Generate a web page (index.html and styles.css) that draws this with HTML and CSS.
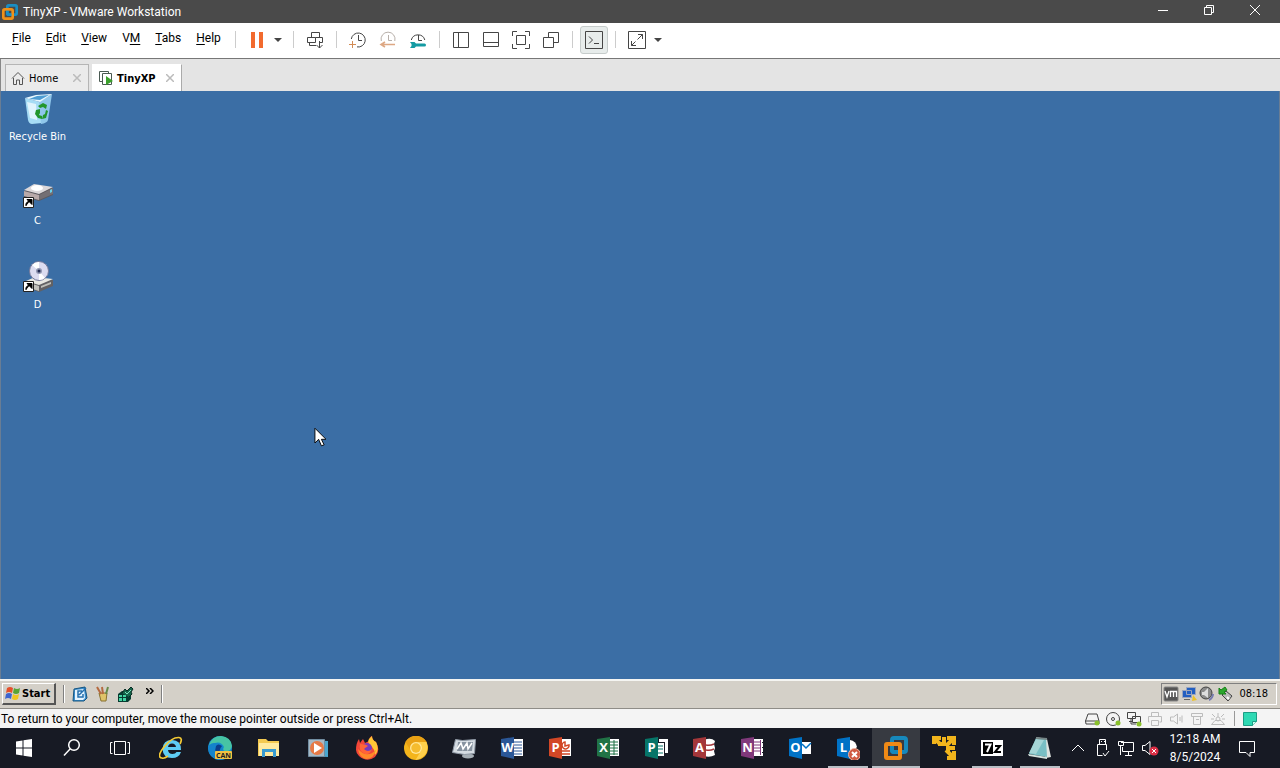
FILE: index.html
```html
<!DOCTYPE html>
<html lang="en">
<head>
<meta charset="utf-8">
<title>TinyXP - VMware Workstation</title>
<link rel="stylesheet" href="styles.css">
</head>
<body>
<div class="screen">
  <header class="titlebar">
    <svg class="app-logo" viewBox="0 0 24 24"><rect x="8" y="2" width="14" height="14" rx="2" fill="none" stroke="#1a8fc4" stroke-width="4"/><rect x="2" y="8" width="14" height="14" rx="2" fill="none" stroke="#f09118" stroke-width="4"/><path d="M8 10V14a2 2 0 0 0 2 2H14" fill="none" stroke="#1a8fc4" stroke-width="4"/></svg>
    <h1 class="title">TinyXP - VMware Workstation</h1>
    <div class="window-controls">
      <button class="wc" aria-label="Minimize"><svg viewBox="0 0 12 12"><path d="M1 6.500H11"/></svg></button>
      <button class="wc" aria-label="Restore"><svg viewBox="0 0 12 12"><path d="M1.500 3.500h7v7h-7zM3.500 3.500v-2h7v7h-2"/></svg></button>
      <button class="wc" aria-label="Close"><svg viewBox="0 0 12 12"><path d="M1 1L11 11M11 1L1 11"/></svg></button>
    </div>
  </header>

  <div class="toolbar">
    <nav class="menu">
      <button><u>F</u>ile</button><button><u>E</u>dit</button><button><u>V</u>iew</button><button>V<u>M</u></button><button><u>T</u>abs</button><button><u>H</u>elp</button>
    </nav>
    <div class="tools">
      <i class="sep"></i>
      <button class="tool" aria-label="Suspend"><svg viewBox="0 0 20 20"><path d="M4 2h4v16H4zM12 2h4v16h-4z" fill="#f26a2e" stroke="none"/></svg></button>
      <button class="caret" aria-label="Power options"><svg viewBox="0 0 8 4"><path d="M0 0h8L4 4z"/></svg></button>
      <i class="sep"></i>
      <button class="tool" aria-label="Send Ctrl+Alt+Del"><svg viewBox="0 0 20 20"><path d="M6.500 7V2.500h8V7.500M2.500 12.500v-5h8v5zM10.500 7.500h7v5H15M4.500 12.500v3H11M14.500 11v7M11.500 15l3 3 3-3"/></svg></button>
      <i class="sep"></i>
      <div class="group">
        <button class="tool" aria-label="Take snapshot"><svg viewBox="0 0 20 20"><path d="M3.300 9A7 7 0 1 1 9 16.900M10.500 5v5.500H14"/><path d="M4.500 11v7M1 14.500h7" stroke="#d28c55"/></svg></button>
        <button class="tool" aria-label="Revert snapshot"><svg viewBox="0 0 20 20"><path d="M3.300 11A7 7 0 1 1 16.800 11M10.500 5v5.500H14" stroke="#b8b0aa"/><path d="M7 12l-4 2.500L7 17M3 14.500h14" stroke="#dda884" stroke-width="1.600"/></svg></button>
        <button class="tool" aria-label="Manage snapshots"><svg viewBox="0 0 20 20"><path d="M3.300 10A7 7 0 0 1 16.800 10M10.500 5v5.500H14"/><path d="M2 12h4.500l1.500 1.500h8.500a1.500 1.500 0 0 1 0 3H8L6.500 18H2l1.500-2v-2z" fill="#159ba3" stroke="none"/></svg></button>
      </div>
      <i class="sep"></i>
      <div class="group">
        <button class="tool" aria-label="Show library"><svg viewBox="0 0 20 20"><path d="M2.500 2.500h15v15h-15zM7.500 2.500v15"/></svg></button>
        <button class="tool" aria-label="Show thumbnails"><svg viewBox="0 0 20 20"><path d="M2.500 2.500h15v14h-15zM2.500 12.500h15"/></svg></button>
        <button class="tool" aria-label="Full screen"><svg viewBox="0 0 20 20"><path d="M1.500 6V1.500H6M14 1.500h4.500V6M18.500 14v4.500H14M6 18.500H1.500V14M5.500 5.500h9v9h-9z"/></svg></button>
        <button class="tool" aria-label="Unity"><svg viewBox="0 0 20 20"><path d="M2.500 7.500h10v10h-10zM7.500 7.500v-5h10v10h-5"/></svg></button>
      </div>
      <i class="sep"></i>
      <button class="tool pressed" aria-label="Console view"><svg viewBox="0 0 20 20"><path d="M1.500 1.500h17v17h-17zM5 6.500l3.500 3.500L5 13.500M10 13.500h5"/></svg></button>
      <i class="sep"></i>
      <button class="tool" aria-label="Stretch guest"><svg viewBox="0 0 20 20"><path d="M1.500 1.500h17v17h-17zM11 4.500h4.500V9M15.500 4.500l-5 5M4.500 11v4.500H9M4.500 15.500l4-4"/></svg></button>
      <button class="caret" aria-label="Stretch options"><svg viewBox="0 0 8 4"><path d="M0 0h8L4 4z"/></svg></button>
    </div>
  </div>

  <div class="tabs">
    <div class="tab">
      <svg class="tab-icon" viewBox="0 0 14 14"><path d="M1 7.500L7 1.500l6 6M2.500 7v6.500h3V9h3v4.500h3V7" fill="none" stroke="#555"/></svg>
      <button class="tab-name">Home</button><button class="tab-close" aria-label="Close Home"><svg viewBox="0 0 8 8"><path d="M0 0l8 8M8 0L0 8"/></svg></button>
    </div>
    <div class="tab active">
      <svg class="tab-icon" viewBox="0 0 14 14"><path d="M3.500 10.500h-3V.500h9v2M3.500 2.500h9v11h-9z" fill="none" stroke="#4a5a52"/><path d="M7 5l7 5-7 4z" fill="#3ba02c"/></svg>
      <button class="tab-name">TinyXP</button><button class="tab-close" aria-label="Close TinyXP"><svg viewBox="0 0 8 8"><path d="M0 0l8 8M8 0L0 8"/></svg></button>
    </div>
  </div>

  <main class="desktop">
    <button class="shortcut">
      <svg viewBox="0 0 32 32"><path d="M3 5l15 4 2 21-10 1q-3 0-4-4z" fill="#a6dcf5"/><path d="M17 9L30 1l-4 26q-1 3-7 4z" fill="#8fc6ea"/><path d="M3 5L14 2 30 1l-12 8z" fill="#e8f8ff"/><path d="M7 6l8-3 12-1-9 5z" fill="#4d9cd2"/><path d="M5 9l9 2 1 16-7-2z" fill="#effaff" opacity=".8"/><path d="M16 13l5-3 4 2-1 4-3-2-3 1zM24 17l2 1-2 7-4 1 1-4 2-1zM14 17l4-1v4l-1 2 3 1v3l-4-1-3-4z" fill="#23962b"/></svg>
      <span>Recycle Bin</span>
    </button>
    <button class="shortcut">
      <svg viewBox="0 0 32 32"><path d="M2 14l10-6 19 3v7l-14 6L2 20z" fill="#5d5a60"/><path d="M2 13l10-6 19 3-14 7z" fill="#dcd8da"/><path d="M2 14l15 4v5L2 19z" fill="#b8a9a9"/><path d="M17 18l14-7v6l-14 6z" fill="#746f74"/><ellipse cx="15" cy="11" rx="6" ry="3" fill="#fff"/><path d="M28 13l2-1v3l-2 1z" fill="#6bd0e8"/><path d="M1.500 20.500h10v10h-10z" fill="#fff" stroke="#222"/><path d="M4 29q-1-4 4-5M5 22.500h5v5z" fill="#000" stroke="#000"/></svg>
      <span>C</span>
    </button>
    <button class="shortcut">
      <svg viewBox="0 0 32 32"><path d="M4 21l9-4 18 2v6l-14 6L4 26z" fill="#626164"/><path d="M4 20l9-4 18 2-14 6z" fill="#e8e8e2"/><path d="M4 21l13 4v5L4 26z" fill="#c2c1bb"/><path d="M19 27l10-4v-2l-10 4z" fill="#bdbdb7"/><circle cx="17" cy="10" r="9.500" fill="#dcdcf0" stroke="#777b9b"/><path d="M17 10L10 4a9 9 0 0 1 7-3zM17 10l6 7a9 9 0 0 1-6 2z" fill="#fff"/><circle cx="17" cy="10" r="3" fill="#9297b2"/><circle cx="17" cy="10" r="1.500" fill="#222b52"/><path d="M1.500 20.500h10v10h-10z" fill="#fff" stroke="#222"/><path d="M4 29q-1-4 4-5M5 22.500h5v5z" fill="#000" stroke="#000"/></svg>
      <span>D</span>
    </button>
    <svg class="cursor" viewBox="0 0 13 21"><path d="M1 1v16l4-4 3 7 3-1-3-6h5z" fill="#fff" stroke="#000"/></svg>
  </main>

  <div class="xpbar">
    <button class="xpstart"><svg viewBox="0 0 16 16"><path d="M2 3q3-2 6 0L7 8Q4 6 1 8z" fill="#e5502b"/><path d="M9 3q3 2 6 0l-1 5q-3 2-6 0z" fill="#58a536"/><path d="M1 9q3-2 6 0l-1 5q-3-2-6 0z" fill="#3d65cf"/><path d="M8 9q3 2 6 0l-1 5q-3 2-6 0z" fill="#f0c520"/></svg>Start</button>
    <i class="xpsep"></i>
    <div class="quick">
      <button aria-label="Show Desktop"><svg viewBox="0 0 16 16"><path d="M2 3l11-2 2 11-3 3H1z" fill="#3c8fce" stroke="#155480"/><path d="M3 4l9-1 1 9-2 2H3z" fill="#e5f4ff"/><path d="M10 5H6v6h5V8M7 9l7-7" stroke="#246fae" stroke-width="1.500" fill="none"/></svg></button>
      <button aria-label="Tools"><svg viewBox="0 0 16 16"><path d="M4 7h8l-1 8H6z" fill="#dfc46a" stroke="#877130"/><path d="M2 1l4 7M7 1l1 7" stroke="#b56a40" stroke-width="2"/><path d="M13 1l-2 7" stroke="#678a48" stroke-width="2"/></svg></button>
      <button aria-label="Utility"><svg viewBox="0 0 16 16"><path d="M0 8l4-3h9v8l-3 3H0z" fill="#073c31"/><path d="M1 9h3v2H1zM5 9h3v2H5zM1 12h3v3H1zM5 12h3v3H5z" fill="#42d3a3"/><path d="M4 7l3-4 2 2 4-4 2 2-2 3 1 2-3 3" fill="#16664b" stroke="#062a22"/><path d="M7 6l2 2 4-4" fill="none" stroke="#7de0bf"/></svg></button>
    </div>
    <button class="more" aria-label="More quick launch items"><svg viewBox="0 0 8 6"><path d="M0 0l3 3-3 3M4 0l3 3-3 3"/></svg></button>
    <i class="xpsep"></i>
    <div class="xptray">
      <svg viewBox="0 0 16 16"><rect x="1" y="1" width="14" height="14" rx="1" fill="#555" stroke="#888"/><path d="M2 5l2 6 2-6M7.500 11V5.500h6V11M10.500 6v5" fill="none" stroke="#fff" stroke-width="1.300"/></svg>
      <svg viewBox="0 0 16 16"><path d="M5.500 1.500h9v7h-9zM1.500 4.500h9v7h-9z" fill="#235fc1" stroke="#9ba5bd"/><path d="M3 13.500h6" stroke="#666"/><path d="M12 9l4 5-5 1z" fill="#eec328"/></svg>
      <svg viewBox="0 0 16 16"><circle cx="7" cy="7" r="6" fill="#8b8b8b" stroke="#444"/><path d="M3 6h2l4-4v10L5 9H3z" fill="#ddd"/><path d="M14 8a7 7 0 0 1-4 6" fill="none" stroke="#777caf" stroke-width="2"/></svg>
      <svg viewBox="0 0 16 16"><path d="M5 9l4-4 6 5-4 5z" fill="#bbb" stroke="#444"/><path d="M10 11l2 2" stroke="#fff" stroke-width="2"/><path d="M2 8V2l2 2 4-3 2 3-3 2 2 2z" fill="#2ca72d" stroke="#168019"/></svg>
      <time>08:18</time>
    </div>
  </div>

  <footer class="status">
    <span>To return to your computer, move the mouse pointer outside or press Ctrl+Alt.</span>
    <div class="devices">
      <svg viewBox="0 0 16 16"><path d="M1.500 10L4 3h9l2 7v3h-13zM1.500 10h13"/><circle class="on" cx="13" cy="12" r="2.500"/></svg>
      <svg viewBox="0 0 16 16"><circle cx="8" cy="8" r="6.500"/><circle cx="8" cy="8" r="1.500"/><circle class="on" cx="13" cy="12" r="2.500"/></svg>
      <svg viewBox="0 0 16 16"><path d="M1.500 1.500h8v6h-8zM6.500 5.500h8v6h-8zM5 8v5h5M3 10.500h4"/><circle class="on" cx="13" cy="13" r="2.500"/></svg>
      <svg class="off" viewBox="0 0 16 16"><path d="M4.500 5V1.500h7V5M2.500 11h-1V5.500h13V11h-2M4.500 9.500h7v5h-7z"/></svg>
      <svg class="off" viewBox="0 0 16 16"><path d="M2.500 6h3l4-3v10l-4-3h-3zM12 6v4M14 4.500v7"/></svg>
      <svg class="off" viewBox="0 0 16 16"><path d="M2.500 2.500h11v3h-11zM4.500 5.500v8h7v-8M7 8.500h3"/></svg>
      <svg class="off" viewBox="0 0 16 16"><path d="M1.500 13.500h13L11 9.500H5zM2 3l3 3M14 3l-3 3M8 2v4M1 8h3M15 8h-3"/><circle cx="8" cy="8" r="2"/></svg>
    </div>
    <i class="status-sep"></i>
    <svg class="note" viewBox="0 0 14 14"><path d="M.500.500h13v9l-4 4h-9z" fill="#2ed9b3" stroke="#1c9c84"/><path d="M9.500 13.500v-4h4" fill="#c6fff0" stroke="#1c9c84"/></svg>
  </footer>

  <nav class="taskbar">
    <button class="app" aria-label="Start"><svg viewBox="0 0 24 24"><path d="M4 5.500l6.500-1v7H4zM11.500 4.300L20 3v8.500h-8.500zM4 12.500h6.500v7L4 18.500zM11.500 12.500H20V21l-8.500-1.300z" fill="#fff"/></svg></button>
    <button class="app" aria-label="Search"><svg viewBox="0 0 24 24"><circle cx="14" cy="9" r="5.300" fill="none" stroke="#fff" stroke-width="1.500"/><path d="M10.300 12.700L4 19.500" stroke="#fff" stroke-width="1.500"/></svg></button>
    <button class="app" aria-label="Task View"><svg viewBox="0 0 24 24"><path d="M6.500 5.500h11v13h-11zM4.500 6.500h-2v11h2M19.500 6.500h2v11h-2" fill="none" stroke="#fff"/></svg></button>
    <div class="pinned">
      <button class="app" aria-label="Internet Explorer"><svg viewBox="0 0 24 24"><path fill-rule="evenodd" d="M22 14H9q.5 4 4.500 4 3 0 4-2h4.500q-2 6-9 6-9 0-9.500-9Q4 4 13 4q9 0 9 10zM9 11h8q-.5-3.500-4-3.500T9 11z" fill="#5fcdf4"/><path d="M21 8Q24 2 20 1.500 13 1 5 11T3 22q2 1 6-2" fill="none" stroke="#f4ca35" stroke-width="1.700"/></svg></button>
      <button class="app" aria-label="Microsoft Edge Canary"><svg viewBox="0 0 24 24"><circle cx="12" cy="12" r="12" fill="#168bd0"/><path d="M1 9Q4 0 13 0q10 1 11 10-1 6-7 5-3-1-1-4Q13 5 7 7 3 7 1 9z" fill="#47c4a4"/><path d="M0 11q6-7 13-2 3 3 1 7 4 4 9 1-4 7-12 7Q0 21 0 11z" fill="#1483cb"/><path d="M8 10q2-3 6 0-5 5 1 8-10 1-7-8z" fill="#0b3e8b"/><rect x="7" y="15" width="17" height="8" rx="1" fill="#f4c242"/><text x="15.500" y="22" class="can">CAN</text></svg></button>
      <button class="app" aria-label="File Explorer"><svg viewBox="0 0 24 24"><path d="M1 3h8l2 2h11v15H1z" fill="#f3c951"/><path d="M2 7h20v13H2z" fill="#ffeaa0"/><path d="M5 21v-8h14v8h-3v-5H8v5z" fill="#389bd0"/></svg></button>
      <button class="app" aria-label="Media Player"><svg viewBox="0 0 24 24"><path d="M4 4l18 1v16l-18-1z" fill="#4aa6ce"/><path d="M2.500 3.500h16v17h-16z" fill="#a5b8c5" stroke="#718da1"/><circle cx="11" cy="12" r="7" fill="#e67a47"/><path d="M8 7l8 5-8 5z" fill="#fff"/></svg></button>
      <button class="app" aria-label="Firefox"><svg viewBox="0 0 24 24"><path d="M1 14Q1 7 4 3l1 4 3-4 2 4 4-2q0-4 3-5 0 4 4 6 5 9-1 15-8 6-16-1-3-3-3-6z" fill="#f34638"/><path d="M17 0q0 4 4 6 4 8-1 13 0-6-5-10-3-3-1-6z" fill="#ffc736"/><path d="M3 13q9 10 18 1-2 9-10 9-7-2-8-10z" fill="#ff8a29"/><circle cx="12" cy="12" r="5" fill="#7a3cbb"/><path d="M5 8q6 0 8 2-3 2-4 3 4 4 8 0-2 6-7 5-7-3-5-10z" fill="#ff6537"/></svg></button>
      <button class="app" aria-label="Chrome Canary"><svg viewBox="0 0 24 24"><circle cx="12" cy="12" r="12" fill="#f4b51b"/><path d="M1.500 6A12 12 0 0 1 22.500 6H12a6 6 0 0 0-5 9z" fill="#e9a114"/><path d="M22.500 6q3 10-4 15-4 3-7 3l6-10q1-5-5-8z" fill="#ffd04b"/><circle cx="12" cy="12" r="6" fill="#ffe799"/><circle cx="12" cy="12" r="4.700" fill="#f5bc2e"/></svg></button>
    </div>
    <button class="app" aria-label="System Monitor"><svg viewBox="0 0 24 24"><ellipse cx="16" cy="20" rx="6" ry="2.500" fill="#a7b0b7"/><path d="M3.500 3.500l7 1 13-1-1 14-10 1-12-2z" fill="#d5dce3" stroke="#8e98a4"/><path d="M6 6h15l-1 9H5z" fill="#8793a0"/><path d="M5 13l4-6 2 6 4-6 1 6 4-6" fill="none" stroke="#fff" stroke-width="1.500"/></svg></button>
    <button class="app" aria-label="Word"><svg viewBox="0 0 24 24"><path d="M12 3h11v17H12z" fill="#fff"/><path d="M14 6h8M14 9h8M14 12h8M14 15h8M14 18h8" stroke="#2b5797"/><path d="M1 3l13-2v22L1 20z" fill="#2b5797"/><text x="7.500" y="16">W</text></svg></button>
    <button class="app" aria-label="PowerPoint"><svg viewBox="0 0 24 24"><path d="M12 3h11v17H12z" fill="#fff"/><path d="M21 9a3.500 3.500 0 1 1-4-3v4zM14 15h8M14 18h8" fill="none" stroke="#d24726" stroke-width="1.500"/><path d="M1 3l13-2v22L1 20z" fill="#d24726"/><text x="7.500" y="16">P</text></svg></button>
    <button class="app" aria-label="Excel"><svg viewBox="0 0 24 24"><path d="M12 3h11v17H12z" fill="#fff"/><path d="M14 6h8M14 9h8M14 12h8M14 15h8M14 18h8M18 4v15" stroke="#217346"/><path d="M1 3l13-2v22L1 20z" fill="#217346"/><text x="7.500" y="16">X</text></svg></button>
    <button class="app" aria-label="Publisher"><svg viewBox="0 0 24 24"><path d="M15 3h9v14h-3V6h-6zM12 7h8v13h-8z" fill="#fff"/><path d="M14 10h5M14 13h5M14 17h5" stroke="#077568"/><path d="M1 3l13-2v22L1 20z" fill="#077568"/><text x="7.500" y="16">P</text></svg></button>
    <button class="app" aria-label="Access"><svg viewBox="0 0 24 24"><path d="M12 4q7-3 11 1l-1 3 1 4-1 3 1 4q-5 3-11 1z" fill="#fff"/><path d="M14 9q4 1 8-1M14 14q4 1 8-1" fill="none" stroke="#a4373a" stroke-width="1.500"/><path d="M1 3l13-2v22L1 20z" fill="#a4373a"/><text x="7.500" y="16">A</text></svg></button>
    <button class="app" aria-label="OneNote"><svg viewBox="0 0 24 24"><path d="M12 3h11v3h-1v1h1v4h-1v1h1v4h-1v1h1v3H12z" fill="#fff"/><path d="M14 6h6M14 9h6M14 12h6M14 15h6M20.500 4v15" stroke="#80397b"/><path d="M1 3l13-2v22L1 20z" fill="#80397b"/><text x="7.500" y="16">N</text></svg></button>
    <button class="app" aria-label="Outlook"><svg viewBox="0 0 24 24"><path d="M12 6h11v12H12z" fill="#fff"/><path d="M14 8l4 4 5-5" fill="none" stroke="#0072c6" stroke-width="1.500"/><path d="M1 3l13-2v22L1 20z" fill="#0072c6"/><text x="7.500" y="16">O</text></svg></button>
    <button class="app running" aria-label="Lync"><svg viewBox="0 0 24 24"><path d="M14 4q6 1 7 7l-4 4h-4z" fill="#fff"/><path d="M1 3l13-2v22L1 20z" fill="#0072c6"/><text x="7.500" y="16">L</text><circle cx="18.500" cy="18.500" r="6" fill="#cf5b43" stroke="#f0b5a0"/><path d="M16 16l5 5M21 16l-5 5" stroke="#fff" stroke-width="2"/></svg></button>
    <button class="app running current" aria-label="VMware Workstation"><svg viewBox="0 0 24 24"><rect x="8" y="2" width="14" height="14" rx="2" fill="none" stroke="#1789bc" stroke-width="4"/><rect x="2" y="8" width="14" height="14" rx="1" fill="none" stroke="#f08a16" stroke-width="4"/><path d="M8 10V14a2 2 0 0 0 2 2H14" fill="none" stroke="#1789bc" stroke-width="4"/></svg></button>
    <button class="app" aria-label="Yellow arrows tool"><svg viewBox="0 0 24 24"><path d="M2 8V2h7M2 2l6 6M15 2h7v7M22 2l-8 8M22 15v7h-7M22 22l-8-8M12 1v7H6M23 12h-7v5" fill="none" stroke="#f2b51c" stroke-width="4"/></svg></button>
    <button class="app running" aria-label="7-Zip"><svg viewBox="0 0 24 24"><path d="M1 4h22v16H1z" fill="#fff"/><path d="M3 6h10v12H3z" fill="#000"/><path d="M5 8.500h5.500L7 16" fill="none" stroke="#fff" stroke-width="2"/><path d="M15 10h5l-5 6h6" fill="none" stroke="#000" stroke-width="2"/></svg></button>
    <button class="app running" aria-label="Notepad"><svg viewBox="0 0 24 24"><path d="M8 1l11 2 4 18-5 1z" fill="#dfe3df"/><path d="M8 2l10 1 1 18L1 18z" fill="#79bfc4"/><path d="M8 3l8 1-8 14-7-1z" fill="#a5d5d6"/><path d="M0 18l19 3v2L1 20z" fill="#d7e4df"/><path d="M8 2l11 1" stroke="#748485" stroke-width="2"/></svg></button>
    <div class="tray">
      <svg viewBox="0 0 20 20"><path d="M4 13l6-6 6 6"/></svg>
      <svg viewBox="0 0 20 20"><path d="M7.500 6V1.500h6V6M5.500 6.500h9V12M5.500 6.500v11h5M9 3.500h1M12 3.500h1M11 15l2 3 4-5"/></svg>
      <svg viewBox="0 0 20 20"><path d="M5 4.500h12.500v9h-11V9M9 17.500h7M12.500 14v3M2.500 3.500h5v4h-5zM4.500 8v9"/></svg>
      <svg viewBox="0 0 20 20"><path d="M2.500 7.500H5l5-4v13l-5-4H2.500z"/><circle cx="14" cy="13" r="4.500" fill="#dc2e45" stroke="none"/><path d="M12 11l4 4M16 11l-4 4"/></svg>
    </div>
    <time class="clock"><span>12:18 AM</span><span>8/5/2024</span></time>
    <button class="notify" aria-label="Notifications"><svg viewBox="0 0 20 20"><path d="M2.500 3.500h15v11H13v4l-4-4H2.500z"/></svg></button>
  </nav>
</div>
</body>
</html>
```
FILE: styles.css
```css
* { box-sizing: border-box; }
body { margin: 0; font-family: Roboto, "Open Sans", sans-serif; font-size: 12px; color: #000; }
button { margin: 0; padding: 0; border: 0; background: none; font: inherit; color: inherit; }
svg { display: block; flex: none; }
i { flex: none; }

.screen { display: flex; flex-direction: column; min-height: 100vh; background: #3b6ea5; }

.titlebar { display: flex; align-items: center; height: 23px; background: #4a4a4a; color: #fff; }
.app-logo { width: 16px; height: 16px; margin: 0 5px 0 2px; }
.title { margin: 0; font-size: 12px; font-weight: 400; }
.window-controls { display: flex; margin-left: auto; align-self: stretch; padding: 0 2px 3px 0; }
.wc { display: grid; place-items: center; width: 46px; }
.wc svg { width: 12px; height: 12px; fill: none; stroke: #fff; }

.toolbar { display: flex; align-items: center; height: 36px; padding: 0 0 2px 4px; background: #fff; border-bottom: 1px solid #777; }
.menu { display: flex; padding-bottom: 4px; }
.menu button { padding: 0 7px 0 8px; }
.menu u { text-underline-offset: 2px; }
.tools { display: flex; align-items: center; }
.group { display: flex; gap: 10px; }
.tool svg { width: 20px; height: 20px; fill: none; stroke: #454545; }
.tool.pressed { margin: 0 -4px; padding: 3px; border: 1px solid #c6cccb; border-radius: 3px; background: #e7eceb; }
.caret { margin-left: 7px; }
.caret svg { width: 8px; height: 4px; fill: #444; }
.sep { width: 1px; height: 17px; margin: 0 11px; background: #ccc; }
.sep:first-child { margin-left: 7px; }

.tabs { display: flex; align-items: flex-end; gap: 3px; height: 32px; padding-left: 4px; background: #e4e4e4; font-family: "DejaVu Sans Condensed", "DejaVu Sans", sans-serif; font-size: 11px; border-left: 1px solid #888; }
.tab { display: flex; align-items: center; height: 27px; width: 84px; padding: 0 7px 0 5px; background: #ebebeb; border: 1px solid #b5b5b5; border-bottom: 0; }
.tab.active { width: 90px; padding-left: 6px; background: #fff; border-color: #fff #aaa #fff #fff; font-weight: 700; }
.tab-icon { width: 14px; height: 14px; margin-right: 4px; }
.tab-close { margin-left: auto; }
.tab-close svg { width: 8px; height: 8px; stroke: #bbb; stroke-width: 1.5; }

.desktop { position: relative; flex: 1; display: flex; flex-direction: column; align-items: flex-start; background: #3b6ea5; border: solid #697d94; border-width: 0 1px; }
.shortcut { display: flex; flex-direction: column; align-items: center; gap: 5px; width: 73px; height: 84px; padding-top: 2px; color: #fff; font-family: "DejaVu Sans Condensed", "DejaVu Sans", sans-serif; font-size: 11px; line-height: 14px; }
.shortcut svg { width: 32px; height: 32px; }
.cursor { position: absolute; left: 313px; top: 336px; width: 12px; height: 20px; }

.xpbar { display: flex; align-items: center; height: 30px; padding: 0 3px 2px 2px; background: #d4d0c8; border-top: 2px solid #f5f5f2; border-bottom: 1px solid #8f8d88; font-family: "DejaVu Sans Condensed", "DejaVu Sans", sans-serif; font-size: 11px; }
.xpstart { display: flex; align-items: center; gap: 1px; width: 54px; height: 22px; padding-left: 2px; border: solid; border-width: 1px 2px 2px 1px; border-color: #fff #555 #555 #fff; font-weight: 700; }
.xpstart svg { width: 16px; height: 16px; }
.xpsep { width: 2px; height: 18px; margin: 0 7px; background: #808080; border-right: 1px solid #fff; }
.quick { display: flex; gap: 7px; }
.quick svg { width: 16px; height: 16px; }
.more { margin-left: 12px; padding-bottom: 6px; }
.more svg { width: 8px; height: 6px; fill: none; stroke: #000; stroke-width: 1.5; }
.xptray { display: flex; align-items: center; gap: 2px; margin-left: auto; height: 22px; padding: 0 8px 0 1px; border: 1px solid; border-color: #808080 #fff #fff #808080; }
.xptray svg { width: 16px; height: 16px; }
.xptray time { margin-left: 4px; }

.status { display: flex; align-items: center; height: 19px; padding: 0 23px 0 1px; background: #f4f4f4; }
.devices { display: flex; gap: 5px; margin-left: auto; }
.devices svg { width: 16px; height: 16px; fill: none; stroke: #444; }
.devices .off { stroke: #bcbcbc; }
.devices .on { fill: #8ac12b; stroke: none; }
.status-sep { width: 1px; height: 15px; margin: 0 8px; background: #999; }
.note { width: 14px; height: 14px; }

.taskbar { display: flex; height: 40px; background: #171a24; color: #fff; }
.pinned { display: flex; gap: 1px; margin-left: 3px; }
.app { display: grid; place-items: center; width: 48px; height: 40px; }
.app svg { width: 24px; height: 24px; grid-area: 1 / 1; }
.app text { fill: #fff; font: 700 13px "Open Sans", sans-serif; text-anchor: middle; }
.app text.can { fill: #222; font-size: 7px; }
.running::after { content: ""; grid-area: 1 / 1; align-self: end; width: 40px; height: 2px; background: #b9bfc5; }
.current { background: #373a41; }
.current::after { width: 48px; }
.tray { display: flex; align-items: center; gap: 4px; margin-left: auto; }
.tray svg, .notify svg { width: 20px; height: 20px; fill: none; stroke: #fff; }
.clock { display: flex; flex-direction: column; align-items: center; justify-content: center; width: 70px; line-height: 18px; }
.notify { display: grid; place-items: center; width: 34px; margin-right: 16px; }
```
